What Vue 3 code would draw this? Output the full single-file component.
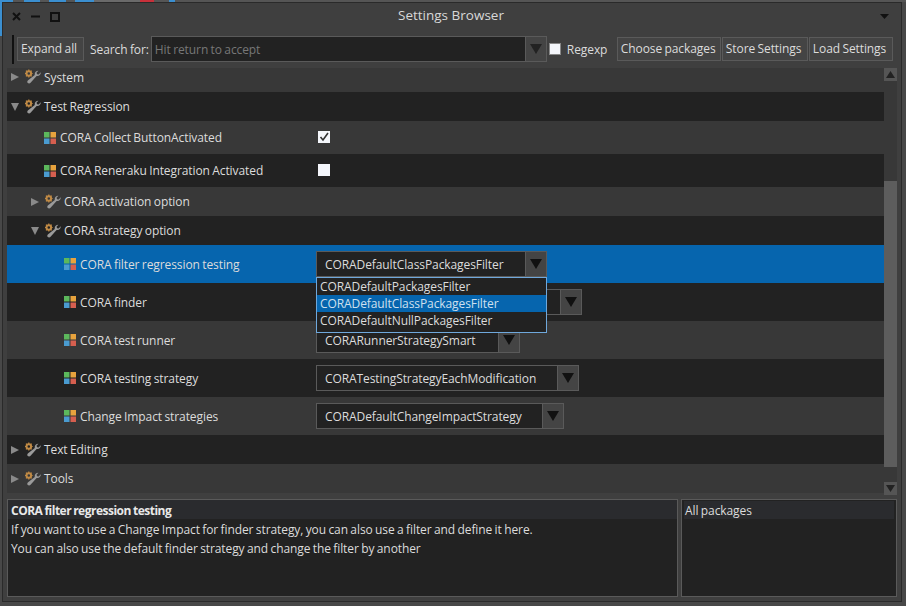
<template>
  <div class="desktop">
    <!-- 后面的桌面只露出顶部几个像素 -->
    <div class="backdrop"></div>
    <div class="window">
      <header class="titlebar">
        <div class="win-btns">
          <svg width="9" height="9" viewBox="0 0 9 9"><path d="M1 1l7 7M8 1L1 8" stroke="#111" stroke-width="2" /></svg>
          <svg width="9" height="9" viewBox="0 0 9 9"><path d="M0 4.500h9" stroke="#111" stroke-width="2" /></svg>
          <svg width="10" height="10" viewBox="0 0 10 10"><path d="M1 1h8v8H1z" fill="none" stroke="#111" stroke-width="2" /></svg>
        </div>
        <span class="title">Settings Browser</span>
        <svg class="menu-arrow" width="9" height="5" viewBox="0 0 9 5"><path d="M0 0h9L4.500 5z" fill="#111" /></svg>
      </header>

      <div class="toolbar">
        <span class="grip"></span>
        <button class="btn expand">Expand all</button>
        <span class="search-label">Search for:</span>
        <div class="search">
          <span class="placeholder">Hit return to accept</span>
          <span class="drop-btn"><svg width="12" height="10" viewBox="0 0 12 10"><path d="M0 0h12L6 10z" fill="#222" /></svg></span>
        </div>
        <span class="check"></span>
        <span class="regexp">Regexp</span>
        <div class="btn-group">
          <button class="btn choose">Choose packages</button>
          <button class="btn store">Store Settings</button>
          <button class="btn load">Load Settings</button>
        </div>
      </div>

      <div class="tree-wrap">
        <div class="tree">
          <div
            v-for="row in rows"
            :key="row.label"
            class="row"
            :class="{ selected: row.selected, odd: row.odd, clipped: row.clipped }"
            :style="{ height: row.h + 'px' }"
          >
            <span class="label" :style="{ paddingLeft: row.indent + 'px' }">
              <template v-if="row.group">
                <svg class="arrow" width="10" height="10" viewBox="0 0 10 10">
                  <path v-if="row.open" d="M1 1h8L5 9z" fill="#8a8a8a" />
                  <path v-else d="M1 1l8 4-8 4z" fill="#8a8a8a" />
                </svg>
                <svg class="tools" width="16" height="16" viewBox="0 0 16 16">
                  <path d="M15.700 3.200c.4 2.400-1.800 4.400-4.100 3.700L5.800 13.600c-.9 1-2.200 1.100-3 .4-.8-.8-.7-2 .3-2.800L9.800 6c-.5-2.400 1.200-4.300 3.600-4.200L11.500 3.800l.6 1.500 1.600.3z" fill="#9a9a9a" />
                  <circle cx="3.800" cy="4.500" r="2.300" fill="none" stroke="#c08a45" stroke-width="2" />
                  <path d="M3.800 .5v1.500M3.800 7v1.500M0 4.500h1.300M6.300 4.500h1.300M1 1.700l1 1M5.600 6.300l1 1M6.600 1.700l-1 1M2 6.300l-1 1" stroke="#c08a45" stroke-width="1.200" />
                </svg>
              </template>
              <svg v-else class="swatch" width="12" height="12" viewBox="0 0 12 12">
                <rect width="5.500" height="5.500" fill="#5cb85c" />
                <rect x="6.500" width="5.500" height="5.500" fill="#e8a33d" />
                <rect y="6.500" width="5.500" height="5.500" fill="#4a9bd0" />
                <rect x="6.500" y="6.500" width="5.500" height="5.500" fill="#d65f4f" />
              </svg>
              <span>{{ row.label }}</span>
            </span>
            <span v-if="row.checkbox !== undefined" class="cell-check" :class="{ on: row.checkbox }">
              <svg v-if="row.checkbox" width="10" height="10" viewBox="0 0 10 10"><path d="M1.500 5l2.500 3 5-7" fill="none" stroke="#333" stroke-width="1.600" /></svg>
            </span>
            <span v-if="row.w" class="select" :style="{ width: row.w + 'px' }">
              <span class="select-text">{{ row.value }}</span>
              <span class="select-btn"><svg width="12" height="10" viewBox="0 0 12 10"><path d="M0 0h12L6 10z" fill="#111" /></svg></span>
            </span>
          </div>
          <ul class="popup">
            <li>CORADefaultPackagesFilter</li>
            <li class="active">CORADefaultClassPackagesFilter</li>
            <li>CORADefaultNullPackagesFilter</li>
          </ul>
        </div>
        <div class="scrollbar">
          <span class="sb-btn"><svg width="9" height="7" viewBox="0 0 9 7"><path d="M0 7h9L4.500 0z" fill="#222" /></svg></span>
          <div class="sb-track"><div class="sb-thumb"></div></div>
          <span class="sb-btn"><svg width="9" height="7" viewBox="0 0 9 7"><path d="M0 0h9L4.500 7z" fill="#222" /></svg></span>
        </div>
      </div>

      <div class="details">
        <div class="panel desc">
          <div class="desc-head">CORA filter regression testing</div>
          <p>If you want to use a Change Impact for finder strategy, you can also use a filter and define it here.</p>
          <p>You can also use the default finder strategy and change the filter by another</p>
        </div>
        <div class="panel pkgs">
          <div class="pkg-row">All packages</div>
        </div>
      </div>
    </div>
  </div>
</template>

<script setup>
const rows = [
  { label: 'System', group: true, indent: 3, h: 24, odd: true, clipped: true },
  { label: 'Test Regression', group: true, open: true, indent: 3, h: 29 },
  { label: 'CORA Collect ButtonActivated', indent: 37, h: 33, odd: true, checkbox: true },
  { label: 'CORA Reneraku Integration Activated', indent: 37, h: 33, checkbox: false },
  { label: 'CORA activation option', group: true, indent: 23, h: 29, odd: true },
  { label: 'CORA strategy option', group: true, open: true, indent: 23, h: 29 },
  { label: 'CORA filter regression testing', indent: 57, h: 38, selected: true, value: 'CORADefaultClassPackagesFilter', w: 231 },
  // 这一行的值被下拉菜单挡住了
  { label: 'CORA finder', indent: 57, h: 38, value: '', w: 266 },
  { label: 'CORA test runner', indent: 57, h: 38, odd: true, value: 'CORARunnerStrategySmart', w: 204 },
  { label: 'CORA testing strategy', indent: 57, h: 38, value: 'CORATestingStrategyEachModification', w: 263 },
  { label: 'Change Impact strategies', indent: 57, h: 38, odd: true, value: 'CORADefaultChangeImpactStrategy', w: 248 },
  { label: 'Text Editing', group: true, indent: 3, h: 29 },
  { label: 'Tools', group: true, indent: 3, h: 29, odd: true }
]
</script>

<style>
html, body { margin: 0; background: #484848; }
</style>

<style scoped>
.desktop {
  width: 906px;
  height: 606px;
  overflow: hidden;
  font-family: "Open Sans", "Noto Sans", sans-serif;
  font-size: 12px;
  letter-spacing: -0.09px;
  word-spacing: -0.6px;
  color: #dcdcdc;
  background: linear-gradient(#3b8fd0, #3b8fd0) 0 0 / 2px 36px no-repeat #484848;
  display: flex;
  flex-direction: column;
}
.backdrop {
  height: 2px;
  background: linear-gradient(90deg, #3b8fd0 0 13px, #555 13px 24px, #3b8fd0 24px 40px, #555 40px 49px, #3b8fd0 49px 66px, #555 66px 75px, #3b8fd0 75px 94px, #6a6a6a 94px 140px, #c8303a 140px 154px, #555 154px 169px, #3b8fd0 169px 175px, #555 175px);
  flex: none;
}
.window {
  flex: 1;
  min-height: 0;
  margin: 0 4px 4px 2px;
  background: #3f3f3f;
  border: 1px solid #2a2a2a;
  display: flex;
  flex-direction: column;
}
.titlebar {
  height: 27px;
  flex: none;
  display: flex;
  align-items: center;
  position: relative;
  padding: 0 10px 0 9px;
}
.win-btns {
  display: flex;
  align-items: center;
  gap: 10px;
}
.title {
  position: absolute;
  left: 395px;
  top: 3px;
  font-size: 13.500px;
  letter-spacing: 0;
  word-spacing: 0;
  color: #d8d8d8;
}
.menu-arrow {
  margin-left: auto;
  margin-right: 2px;
}
.toolbar {
  height: 38px;
  flex: none;
  display: flex;
  align-items: center;
  padding-left: 9px;
}
.grip {
  width: 2px;
  height: 29px;
  background: #111;
  margin-right: 3px;
}
.btn {
  height: 24px;
  padding: 0 0 2px 3px;
  border: 1px solid #5a5a5a;
  background: #444;
  color: #dcdcdc;
  font: inherit;
  letter-spacing: inherit;
  word-spacing: inherit;
  margin: 0;
  box-sizing: border-box;
  text-align: left;
}
.expand {
  width: 67px;
}
.search-label {
  margin-left: 6px;
}
.search {
  margin-left: 2px;
  width: 396px;
  height: 26px;
  box-sizing: border-box;
  border: 1px solid #5a5a5a;
  background: #222;
  display: flex;
  align-items: center;
  justify-content: space-between;
}
.placeholder {
  margin-left: 3px;
  color: #777;
}
.drop-btn {
  width: 20px;
  height: 24px;
  background: #444;
  border-left: 1px solid #5a5a5a;
  display: flex;
  align-items: center;
  justify-content: center;
}
.check {
  width: 12px;
  height: 12px;
  margin-left: 2px;
  box-sizing: border-box;
  background: #f4f6fb;
  border: 1px solid #888;
}
.regexp {
  margin-left: 6px;
  width: 50px;
}
.btn-group {
  display: flex;
  gap: 1px;
}
.choose {
  width: 104px;
}
.store {
  width: 86px;
}
.load {
  width: 84px;
}
.tree-wrap {
  height: 427px;
  flex: none;
  display: flex;
  margin-left: 4px;
  margin-right: 4px;
}
.tree {
  width: 877px;
  height: 425px;
  position: relative;
}
.row {
  display: flex;
  align-items: center;
  background: #222;
  box-sizing: border-box;
}
.row.odd {
  background: #383838;
}
.row.selected {
  background: #0665ae;
}
/* 第一行被滚动裁掉了上面一截 */
.row.clipped {
  padding-bottom: 6px;
}
.label {
  width: 309px;
  box-sizing: border-box;
  display: flex;
  align-items: center;
  flex: none;
  color: #dcdcdc;
}
.arrow {
  margin-right: 5px;
}
.tools {
  margin-right: 3px;
}
.swatch {
  margin-right: 4px;
}
.cell-check {
  width: 12px;
  height: 12px;
  background: #f4f6fb;
  display: flex;
  align-items: center;
  justify-content: center;
  margin: 0 0 2px 2px;
}
.select {
  height: 26px;
  box-sizing: border-box;
  border: 1px solid #5a5a5a;
  background: #222;
  display: flex;
  align-items: center;
  justify-content: space-between;
}
.select-text {
  margin-left: 8px;
}
.select-btn {
  width: 20px;
  height: 24px;
  background: #444;
  border-left: 1px solid #5a5a5a;
  display: flex;
  align-items: center;
  justify-content: center;
}
.popup {
  position: absolute;
  left: 309px;
  top: 209px;
  width: 231px;
  height: 56px;
  box-sizing: border-box;
  margin: 0;
  padding: 0;
  list-style: none;
  background: #222;
  border: 1px solid #6fa8dc;
}
.popup li {
  height: 17px;
  line-height: 17px;
  padding-left: 3px;
}
.popup li.active {
  background: #0665ae;
  color: #cfe0ee;
}
.scrollbar {
  width: 13px;
  height: 427px;
  display: flex;
  flex-direction: column;
  background: #383838;
}
.sb-btn {
  height: 13px;
  flex: none;
  background: #555;
  display: flex;
  align-items: center;
  justify-content: center;
}
.sb-track {
  flex: 1;
  position: relative;
}
.sb-thumb {
  position: absolute;
  left: 0;
  right: 0;
  top: 100px;
  bottom: 15px;
  background: #5d5d5d;
}
.details {
  height: 99px;
  flex: none;
  display: flex;
  gap: 3px;
  margin: 4px 4px 0;
}
.panel {
  box-sizing: border-box;
  border: 1px solid #5a5a5a;
  background: #222;
  height: 98px;
}
.desc {
  width: 671px;
}
.desc-head {
  height: 19px;
  line-height: 21px;
  background: #2a2b2e;
  padding-left: 3px;
  font-weight: 700;
  letter-spacing: -0.5px;
  color: #e8e8e8;
}
.desc p {
  margin: 0;
  height: 19px;
  line-height: 21px;
  padding-left: 3px;
}
.pkgs {
  width: 216px;
  padding: 1px 2px;
}
.pkg-row {
  height: 18px;
  line-height: 20px;
  padding-left: 1px;
  background: #2a2b2e;
}
</style>
